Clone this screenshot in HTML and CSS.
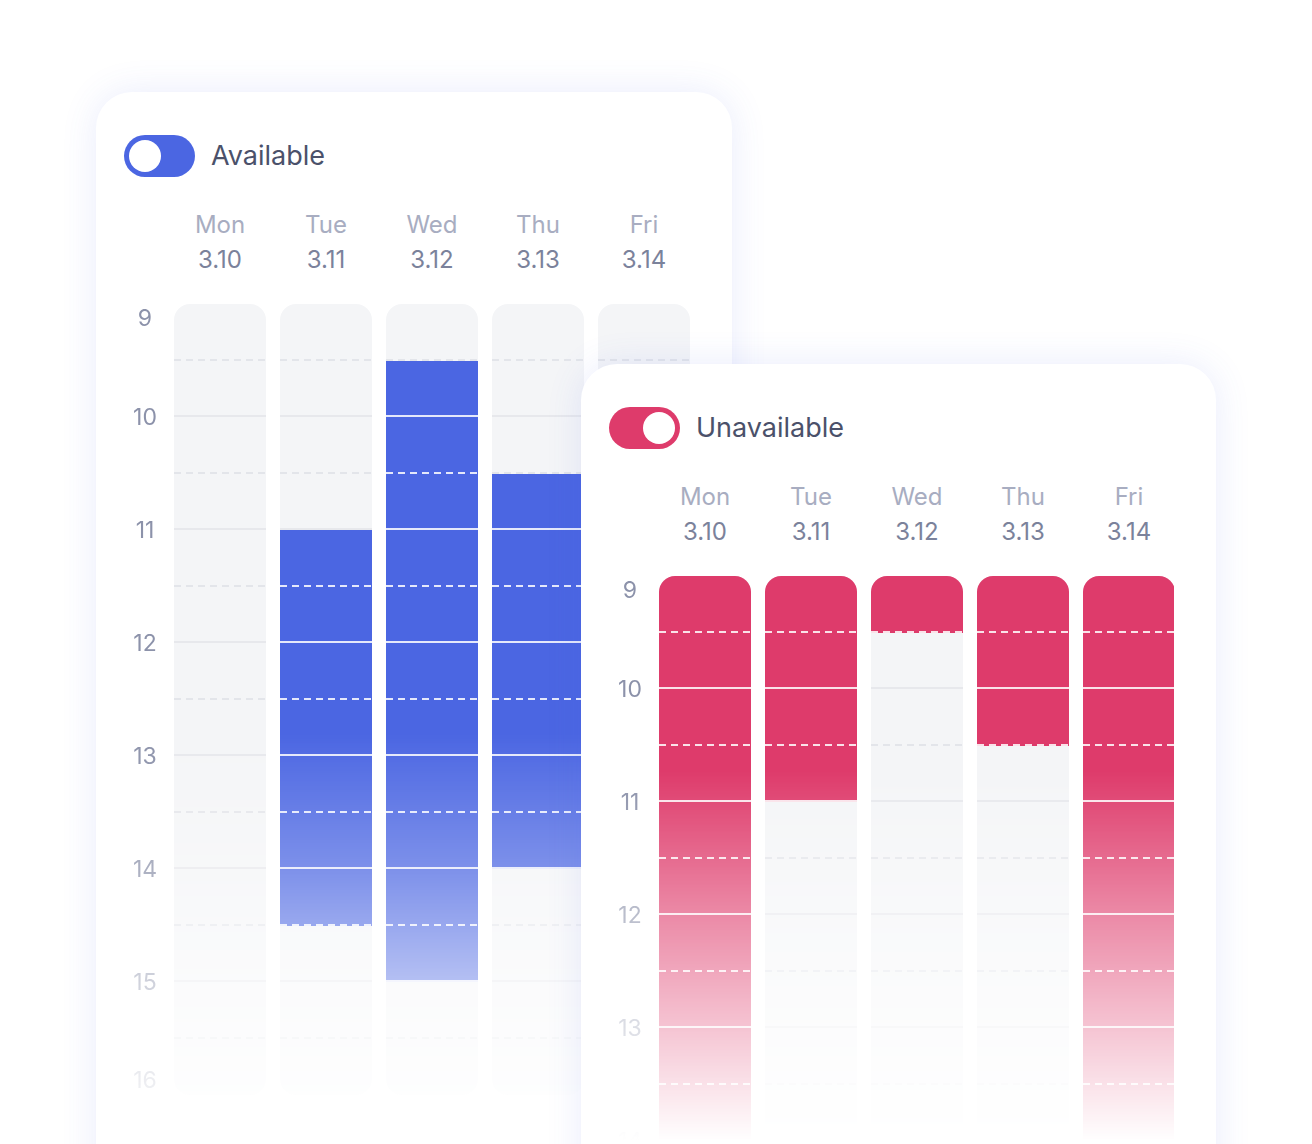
FILE: index.html
```html
<!DOCTYPE html>
<html lang="en">
<head>
  <meta charset="UTF-8" />
  <meta name="viewport" content="width=device-width, initial-scale=1.0" />
  <title>Availability</title>
  <link rel="stylesheet" href="styles.css">
</head>
<body>
  <div class="stage">

    <section class="card available">
      <div class="card-head">
        <span class="toggle"><span class="knob"></span></span>
        <span class="title">Available</span>
      </div>

      <div class="days">
        <span></span>
        <div class="day"><span class="day-name">Mon</span><span class="day-date">3.10</span></div>
        <div class="day"><span class="day-name">Tue</span><span class="day-date">3.11</span></div>
        <div class="day"><span class="day-name">Wed</span><span class="day-date">3.12</span></div>
        <div class="day"><span class="day-name">Thu</span><span class="day-date">3.13</span></div>
        <div class="day"><span class="day-name">Fri</span><span class="day-date">3.14</span></div>
      </div>

      <div class="grid">
        <div class="hours">
          <span>9</span><span>10</span><span>11</span><span>12</span><span>13</span><span>14</span><span>15</span><span>16</span>
        </div>
        <!-- Mon -->
        <div class="col">
          <div class="slot"></div><div class="slot"></div><div class="slot"></div><div class="slot"></div><div class="slot"></div><div class="slot"></div><div class="slot"></div>
          <div class="slot"></div><div class="slot"></div><div class="slot"></div><div class="slot"></div><div class="slot"></div><div class="slot"></div><div class="slot"></div>
        </div>
        <!-- Tue 11:00 - 14:30 -->
        <div class="col">
          <div class="slot"></div><div class="slot"></div><div class="slot"></div><div class="slot"></div><div class="slot on"></div><div class="slot on"></div><div class="slot on"></div>
          <div class="slot on"></div><div class="slot on"></div><div class="slot on"></div><div class="slot on"></div><div class="slot"></div><div class="slot"></div><div class="slot"></div>
        </div>
        <!-- Wed 9:30 - 15:00 -->
        <div class="col">
          <div class="slot"></div><div class="slot on"></div><div class="slot on"></div><div class="slot on"></div><div class="slot on"></div><div class="slot on"></div><div class="slot on"></div>
          <div class="slot on"></div><div class="slot on"></div><div class="slot on"></div><div class="slot on"></div><div class="slot on"></div><div class="slot"></div><div class="slot"></div>
        </div>
        <!-- Thu 10:30 - 14:00 -->
        <div class="col">
          <div class="slot"></div><div class="slot"></div><div class="slot"></div><div class="slot on"></div><div class="slot on"></div><div class="slot on"></div><div class="slot on"></div>
          <div class="slot on"></div><div class="slot on"></div><div class="slot on"></div><div class="slot"></div><div class="slot"></div><div class="slot"></div><div class="slot"></div>
        </div>
        <!-- Fri -->
        <div class="col">
          <div class="slot"></div><div class="slot"></div><div class="slot"></div><div class="slot"></div><div class="slot"></div><div class="slot"></div><div class="slot"></div>
          <div class="slot"></div><div class="slot"></div><div class="slot"></div><div class="slot"></div><div class="slot"></div><div class="slot"></div><div class="slot"></div>
        </div>
      </div>
    </section>

    <section class="card unavailable">
      <div class="card-head">
        <span class="toggle"><span class="knob"></span></span>
        <span class="title">Unavailable</span>
      </div>

      <div class="days">
        <span></span>
        <div class="day"><span class="day-name">Mon</span><span class="day-date">3.10</span></div>
        <div class="day"><span class="day-name">Tue</span><span class="day-date">3.11</span></div>
        <div class="day"><span class="day-name">Wed</span><span class="day-date">3.12</span></div>
        <div class="day"><span class="day-name">Thu</span><span class="day-date">3.13</span></div>
        <div class="day"><span class="day-name">Fri</span><span class="day-date">3.14</span></div>
      </div>

      <div class="grid">
        <div class="hours">
          <span>9</span><span>10</span><span>11</span><span>12</span><span>13</span><span>14</span><span>15</span><span>16</span>
        </div>
        <!-- Mon all day -->
        <div class="col">
          <div class="slot on"></div><div class="slot on"></div><div class="slot on"></div><div class="slot on"></div><div class="slot on"></div><div class="slot on"></div><div class="slot on"></div>
          <div class="slot on"></div><div class="slot on"></div><div class="slot on"></div><div class="slot on"></div><div class="slot on"></div><div class="slot on"></div><div class="slot on"></div>
        </div>
        <!-- Tue 9:00 - 11:00 -->
        <div class="col">
          <div class="slot on"></div><div class="slot on"></div><div class="slot on"></div><div class="slot on"></div><div class="slot"></div><div class="slot"></div><div class="slot"></div>
          <div class="slot"></div><div class="slot"></div><div class="slot"></div><div class="slot"></div><div class="slot"></div><div class="slot"></div><div class="slot"></div>
        </div>
        <!-- Wed 9:00 - 9:30 -->
        <div class="col">
          <div class="slot on"></div><div class="slot"></div><div class="slot"></div><div class="slot"></div><div class="slot"></div><div class="slot"></div><div class="slot"></div>
          <div class="slot"></div><div class="slot"></div><div class="slot"></div><div class="slot"></div><div class="slot"></div><div class="slot"></div><div class="slot"></div>
        </div>
        <!-- Thu 9:00 - 10:30 -->
        <div class="col">
          <div class="slot on"></div><div class="slot on"></div><div class="slot on"></div><div class="slot"></div><div class="slot"></div><div class="slot"></div><div class="slot"></div>
          <div class="slot"></div><div class="slot"></div><div class="slot"></div><div class="slot"></div><div class="slot"></div><div class="slot"></div><div class="slot"></div>
        </div>
        <!-- Fri all day -->
        <div class="col">
          <div class="slot on"></div><div class="slot on"></div><div class="slot on"></div><div class="slot on"></div><div class="slot on"></div><div class="slot on"></div><div class="slot on"></div>
          <div class="slot on"></div><div class="slot on"></div><div class="slot on"></div><div class="slot on"></div><div class="slot on"></div><div class="slot on"></div><div class="slot on"></div>
        </div>
      </div>
    </section>

  </div>
</body>
</html>
```

FILE: styles.css
```css
:root {
  --blue: #4b66e2;
  --red: #de3b6b;
  --col-bg: #f4f5f7;
  --line-hour: #e7e8ec;
  --line-half: #e3e5ea;
  --text-title: #4b516a;
  --text-day: #a8adc1;
  --text-date: #7b829b;
  --text-hour: #8c92aa;
}
html, body {
  margin: 0;
  height: 100%;
  overflow: hidden;
  background: #fff;
  font-family: Inter, 'Noto Sans', sans-serif;
}
/* cards run past the bottom edge of the window */
.stage {
  display: grid;
  grid-template-columns: 96px 485px 151px 484px 1fr;
  grid-template-rows: 92px 272px 860px;
  height: 1224px;
}
.card {
  background: #fff;
  border-radius: 36px;
  box-shadow: 0 0 36px rgba(76, 96, 230, 0.12);
  padding: 43px 42px 0 28px;
  overflow: hidden;
}
.card.available {
  --accent: var(--blue);
  grid-column: 2 / 4;
  grid-row: 2 / 4;
}
.card.unavailable {
  --accent: var(--red);
  grid-column: 3 / 5;
  grid-row: 3 / 4;
  z-index: 2;
}
.card-head {
  display: flex;
  align-items: center;
  gap: 16px;
  height: 42px;
}
.toggle {
  display: flex;
  align-items: center;
  box-sizing: border-box;
  width: 71px;
  height: 42px;
  padding: 0 5px;
  border-radius: 21px;
  background: var(--accent);
}
.unavailable .toggle {
  justify-content: flex-end;
}
.knob {
  width: 32px;
  height: 32px;
  border-radius: 50%;
  background: #fff;
}
.title {
  font-size: 27px;
  line-height: 42px;
  color: var(--text-title);
}
.days,
.grid {
  display: grid;
  grid-template-columns: 36px repeat(5, 92px);
  column-gap: 14px;
}
.days {
  margin-top: 30px;
}
.day {
  display: flex;
  flex-direction: column;
  align-items: center;
  font-size: 24px;
  line-height: 35px;
}
.day-name {
  color: var(--text-day);
}
.day-date {
  color: var(--text-date);
}
.grid {
  margin-top: 27px;
  align-items: start;
}
.available .grid {
  -webkit-mask-image: linear-gradient(to bottom, #000 430px, rgba(0, 0, 0, 0.72) 565px, rgba(0, 0, 0, 0.42) 676px, transparent 840px);
  mask-image: linear-gradient(to bottom, #000 430px, rgba(0, 0, 0, 0.72) 565px, rgba(0, 0, 0, 0.42) 676px, transparent 840px);
}
.unavailable .grid {
  -webkit-mask-image: linear-gradient(to bottom, #000 195px, rgba(0, 0, 0, 0.6) 338px, rgba(0, 0, 0, 0.3) 451px, transparent 565px);
  mask-image: linear-gradient(to bottom, #000 195px, rgba(0, 0, 0, 0.6) 338px, rgba(0, 0, 0, 0.3) 451px, transparent 565px);
}
.hours {
  display: flex;
  flex-direction: column;
  align-items: center;
  padding-left: 6px;
  font-size: 23px;
  line-height: 28px;
  color: var(--text-hour);
}
.hours span {
  height: 28px;
  margin-top: 85px;
}
.hours span:first-child {
  margin-top: 0;
}
.hours span:nth-child(2) {
  margin-top: 71px;
}
.hours span:last-child {
  margin-top: 70px;
}
.col {
  display: flex;
  flex-direction: column;
  border-radius: 16px;
  overflow: hidden;
  background: var(--col-bg);
}
.slot {
  --line: var(--line-hour);
  --fill: transparent;
  height: 56.5px;
  flex: none;
  background: linear-gradient(var(--line), var(--line)) bottom / 100% 2px no-repeat, var(--fill);
}
.slot:nth-child(odd) {
  --line: var(--line-half);
  background: repeating-linear-gradient(to right, var(--line) 0 7px, transparent 7px 12px) bottom / 100% 2px no-repeat, var(--fill);
}
.slot.on {
  --line: rgba(255, 255, 255, 0.85);
  --fill: var(--accent);
}
.slot:last-child {
  background: var(--fill);
}
```
